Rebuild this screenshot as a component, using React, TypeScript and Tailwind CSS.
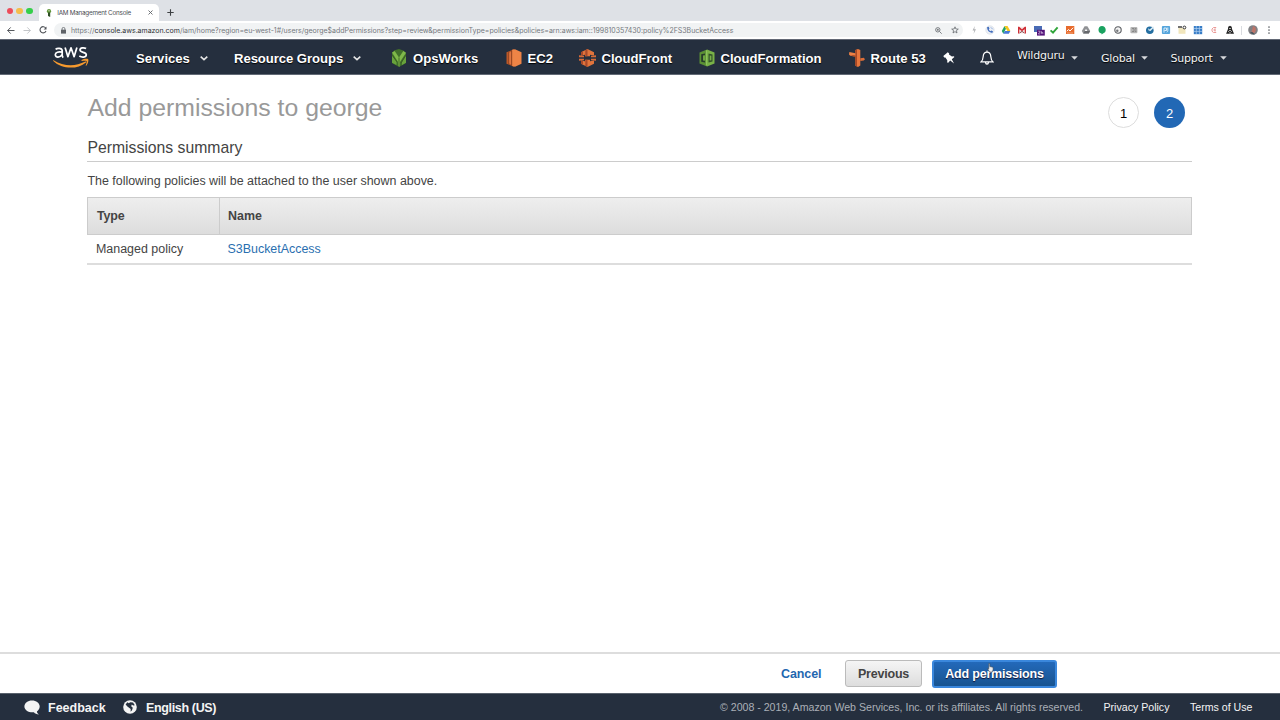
import type { ReactNode } from "react";

const Caret = () => (
  <svg className="mt-px shrink-0" width="8" height="5" viewBox="0 0 8 5" fill="none">
    <path d="M0.7 0.7 4 3.7 7.3 0.7" stroke="#e6e6e6" strokeWidth="1.6" />
  </svg>
);

const Triangle = () => (
  <svg className="shrink-0" width="7" height="4" viewBox="0 0 7 4">
    <path d="M0.2 0.2h6.6L3.5 3.8z" fill="#d8dadd" />
  </svg>
);

const Cell = ({ children }: { children: ReactNode }) => (
  <span className="flex h-4 w-4 shrink-0 items-center justify-center">
    <svg width="10" height="10" viewBox="0 0 10 10" className="overflow-visible">
      {children}
    </svg>
  </span>
);

const AwsLogo = () => (
  <svg width="37" height="25" viewBox="0 0 37 25" className="shrink-0 overflow-visible" fill="none">
    <g stroke="#fff" strokeWidth="1.7" strokeLinejoin="round">
      <path d="M2.6 4.3C3.8 3.2 8.8 2.5 9.2 5.6V10.2C9.3 11.4 9.6 11.9 10.2 12.6M9.1 7.2C5.5 6.5 2.3 7 2.3 9.8c0 3.1 4.9 3.1 6.9-.4" />
      <path d="M12.1 2.4 14.9 11.7 18 2.8 21.1 11.7 23.9 2.4" />
      <path d="M33.1 3.6C31.2 2.5 27 2.4 27 5c0 3 6.3 1.7 6.3 4.7 0 3-4.7 2.8-7 1.4" />
    </g>
    <path d="M0.6 15.2C10.2 21.1 21.8 22 32.4 16.5c.8-.3 1.2.4.6.9C23.8 25.1 8.6 24 .3 15.9c-.4-.4-.1-.9.3-.7z" fill="#f79a2e" />
    <path d="M28.6 15.1c2.1-1.5 6-1.6 6.6-.9.6.7-.2 4.8-2 6.5-.4.3-.7.1-.5-.3.5-1.2 1.4-3.8.9-4.3-.5-.6-3.2-.4-4.7-.2-.5 0-.6-.4-.3-.8z" fill="#f79a2e" />
  </svg>
);

const OpsWorksIcon = () => (
  <svg width="16" height="18" viewBox="0 0 16 18" className="shrink-0">
    <path d="M3.5 1.2 8 0l4.3 1.5L15 4v10l-7 4-7-4V4z" fill="#41702a" />
    <path d="M1 3.5 3.7 2 8 8.5 12.3 2 15 3.8 9 13v4.5L7 17V13z" fill="#7fb84a" />
    <path d="M1 6.5 5.5 12.5V16L1 13.7zM15 6.5 11 13v3l4-2.3z" fill="#69a33c" />
    <path d="M1 6 6 13M8 8.5V17M15 6 10 14" stroke="#35591f" strokeWidth=".8" />
  </svg>
);

const Ec2Icon = () => (
  <svg width="16" height="18" viewBox="0 0 16 18" className="shrink-0">
    <path d="M.5 3.3 8 .3v17.4l-7.5-3z" fill="#bd5827" />
    <path d="M6 .8 9 .2l6.5 3v11.5L9 17.8l-3-.8z" fill="#ee8446" />
    <path d="M2.8 2.7v12.8M5.7 1.3v15.5" stroke="#7e3b20" strokeWidth=".8" />
    <path d="M3.2 3.5 5.1 2.8v12.5l-1.9-.7z" fill="#dd7440" />
  </svg>
);

const CloudFrontIcon = () => (
  <svg width="17" height="18" viewBox="0 0 17 18" className="shrink-0">
    <path d="M2 3.2 8.5 0 15 3.2v3.3l-4-.7v1.5H6V5.8l-4 .7z" fill="#e0743c" />
    <path d="M2 14.8 8.5 18l6.5-3.2v-3.3l-4 .7v-1.5H6v1.5l-4-.7z" fill="#e0743c" />
    <path d="M2 3.2 4 2.3v3.8l-2 .4zM6.3 1.2 8.5 0v7.3H6.3zM2 14.8l2 .9v-3.8l-2-.4zM6.3 16.9 8.5 18v-7.3H6.3z" fill="#a8492a" />
    <path d="M0 6.2 5 6.8v1.4H0zM0 11.8l5-.6V9.8H0zM17 6.2l-5 .6v1.4h5zM17 11.8l-5-.6V9.8h5z" fill="#d66b39" />
  </svg>
);

const CloudFormationIcon = () => (
  <svg width="16" height="18" viewBox="0 0 16 18" className="shrink-0">
    <path d="M.5 3.5 8 .4v17.2l-7.5-3z" fill="#5b9034" />
    <path d="M8 .4l7.5 3.1v11.1L8 17.6z" fill="#79b147" />
    <path d="M2.2 5.3 6 4.6v9L2.2 12.8z" fill="#263b2b" />
    <path d="M4 6.6 6 6.2v5.6l-2-.4z" fill="#6fa640" />
    <path d="M9.5 4.6l4 .9v7l-4 .9z" fill="#31512a" />
    <path d="M10.7 6.4l1.7.3v4.6l-1.7.3z" fill="#78ae49" />
    <path d="M7.4 1.2v15.4" stroke="#94c763" strokeWidth="1" />
  </svg>
);

const Route53Icon = () => (
  <svg width="16" height="18" viewBox="0 0 16 18" className="shrink-0">
    <path d="M6.4 1 9 0l2.3 1v15.6L9 18l-2.6-1.2z" fill="#e7763d" />
    <path d="M6.4 1 8 .4v17L6.4 16.8z" fill="#a94824" />
    <path d="M.3 3 6.4 4.2v3.6L1.3 6.8 0 5.4z" fill="#ec8045" />
    <path d="M11.3 9.2 14.8 8.8 16 10.2l-1.2 1.4-3.5.4z" fill="#dc6d38" />
    <path d="M6.4 6.5 1.3 6l5.1 2z" fill="#9b4122" />
  </svg>
);

const Extensions = () => (
  <div className="flex">
    <Cell>
      <path d="M5.8 1 3.5 5.5h1.8L4.5 9 7 4.2H5.3z" fill="#b1b3b6" />
    </Cell>
    <Cell>
      <circle cx="5" cy="5" r="4.2" fill="#eef1f6" stroke="#cbd2dd" strokeWidth=".5" />
      <path d="M2 2.3C2.2 5.5 4 7.6 7.3 8l.7-1.7-1.8-.8-.8.7C4.4 5.6 4 5 3.8 4.3l.7-.7-.8-1.9z" fill="#416dbd" />
      <path d="M5.8 2.3l2 2" stroke="#769bd8" strokeWidth=".8" />
    </Cell>
    <Cell>
      <path d="M3.5 1 .8 6l1.5 2.7L5 3.8z" fill="#24a266" />
      <path d="M3.5 1h3l2.9 5H6.3z" fill="#f6c61b" />
      <path d="M3.8 6h5.6L7.8 8.7H2.3z" fill="#4779d7" />
    </Cell>
    <Cell>
      <path d="M1 1.8h8v6.6H1z" fill="#f7e8e7" />
      <path d="M1 1.8h1.2L5 4.2l2.8-2.4H9v6.6H7.7V4.3L5 6.3 2.3 4.3v4.1H1z" fill="#d02e36" />
      <path d="M2.6 8 5 6.4 7.4 8" stroke="#6c252c" strokeWidth=".8" fill="none" />
    </Cell>
    <Cell>
      <path d="M1 1h8v6H1z" fill="#496bb5" />
      <path d="M4 4.8h7.8v5.8H4z" fill="#54137a" />
      <path d="M5.2 6.2h1.7v1L5.3 9h1.8M8.3 6v3M8.3 7.5h1.5V9" stroke="#e4d3ef" strokeWidth=".6" fill="none" />
    </Cell>
    <Cell>
      <path d="M1.6 5.4 4 7.7 8.6 2.4" stroke="#2fa53a" strokeWidth="1.9" fill="none" />
    </Cell>
    <Cell>
      <path d="M1 1h8.3v8H1z" fill="#e76b2d" />
      <path d="M1.8 6.2 3.6 4.5 5 6 8.2 2.7" stroke="#fff" strokeWidth="1" fill="none" />
      <path d="M2 8h6" stroke="#f6b48e" strokeWidth=".8" />
    </Cell>
    <Cell>
      <path d="M3.6 1.2h2.8L9.2 6 7.8 8.6H2.2L.8 6z" fill="#909295" />
      <path d="M5 3.8 6.3 6H3.8z" fill="#fff" />
      <path d="M3.8 6h5.3L7.8 8.6H2.2z" fill="#66686c" />
    </Cell>
    <Cell>
      <path d="M5 .9a3.9 3.9 0 0 1 1 7.6L4.6 9.5V8.6A3.9 3.9 0 0 1 5 .9z" fill="#1aa260" />
    </Cell>
    <Cell>
      <circle cx="5" cy="5" r="3.2" fill="#f4f4f4" stroke="#5b5e62" strokeWidth="1.1" />
      <circle cx="4.3" cy="5.8" r="1.2" fill="#74777a" />
    </Cell>
    <Cell>
      <rect x="1.4" y="2" width="7" height="6.2" rx="1" fill="#b5b5b5" />
      <path d="M3 3.5h2v3H3M6 3.5h1.4M6 5h1.4M6 6.5h1.4" stroke="#777" strokeWidth=".7" fill="none" />
    </Cell>
    <Cell>
      <circle cx="4.8" cy="5.2" r="3.8" fill="#236ea1" />
      <path d="M3 3.2 4.7 4.6 8 1.2l1 1.2L5.5 6 3.6 5.6z" fill="#d9eaf5" />
    </Cell>
    <Cell>
      <rect x=".9" y="1" width="8.2" height="8" rx="1" fill="#55a5dc" />
      <path d="M3 7.7V3h2.5v2.5H3.4M6.8 2.5v3c0 1-.7 1.4-1 1.8" stroke="#e4f3fd" strokeWidth=".9" fill="none" />
    </Cell>
    <Cell>
      <path d="M1.5 3h7v5.8h-7z" fill="#f1e6bd" />
      <path d="M1 2h4" stroke="#333" strokeWidth="1.4" />
      <circle cx="7.4" cy="2.5" r="1.4" fill="#fff" stroke="#333" strokeWidth="1" />
    </Cell>
    <Cell>
      <path d="M.8 1h8.4v8.2H.8z" fill="#377dc7" />
      <path d="M3.3 1v8M6.4 1v8M1 3.5h8M1 6.4h8" stroke="#b1d0ef" strokeWidth=".7" />
    </Cell>
    <Cell>
      <path d="M7.2 2.5H4.5L3 4v2.2l1.5 1.3h2.7M7 4.1H5.2v1.7H7" stroke="#ea9a98" strokeWidth="1" fill="none" />
    </Cell>
    <Cell>
      <path d="M5 .7 6.7 1.8 7 4 9 8.8H1.1L3 4 3.2 1.8z" fill="#242424" />
      <path d="M3.2 6.8 5 5.1l1.8 1.7M4.1 3.5h1.8M5 7v1.5" stroke="#fff" strokeWidth=".7" fill="none" />
    </Cell>
  </div>
);

const Browser = () => (
  <div className="flex h-10 flex-col border-b border-[#626875] font-['Inter',sans-serif]">
    <div className="flex h-[21px] items-end bg-[#dee1e6]">
      <div className="mb-[7px] ml-[6.5px] flex gap-[3.8px]">
        <span className="h-[6.2px] w-[6.2px] rounded-full bg-[#ed4c5a]" />
        <span className="h-[6.2px] w-[6.2px] rounded-full bg-[#f5bd4b]" />
        <span className="h-[6.2px] w-[6.2px] rounded-full bg-[#35cf4a]" />
      </div>
      <div className="ml-[6.5px] flex h-[17px] w-[120px] items-center rounded-t-[5px] bg-white">
        <svg width="6" height="8" viewBox="0 0 6 8" className="ml-[7px]">
          <circle cx="3" cy="2.2" r="2.1" fill="#5e9438" />
          <path d="M2 3.5h2.2V8L2 7z" fill="#2e4f25" />
          <circle cx="3" cy="1.7" r=".7" fill="#d1e0bd" />
        </svg>
        <span className="ml-[5px] w-[91px] text-[6.3px] leading-[10px] tracking-[-0.22px] whitespace-nowrap text-[#4b4e52]">IAM Management Console</span>
        <svg width="5" height="5" viewBox="0 0 5 5">
          <path d="M.5.5l4 4M4.5.5l-4 4" stroke="#5f6368" strokeWidth=".9" />
        </svg>
      </div>
      <svg width="7" height="7" viewBox="0 0 7 7" className="mb-[5px] ml-[7.5px]">
        <path d="M3.5.3v6.4M.3 3.5h6.4" stroke="#3d4043" strokeWidth="1.1" />
      </svg>
    </div>
    <div className="flex h-[18px] items-center bg-white">
      <svg width="8" height="7" viewBox="0 0 8 7" className="ml-[7px]" fill="none" stroke="#55585d">
        <path d="M7.5 3.5h-7M3.7.4.7 3.5l3 3.1" />
      </svg>
      <svg width="8" height="7" viewBox="0 0 8 7" className="ml-2" fill="none" stroke="#c4c6c9">
        <path d="M.5 3.5h7M4.3.4l3 3.1-3 3.1" />
      </svg>
      <svg width="8" height="8" viewBox="0 0 8 8" className="ml-2" fill="none" stroke="#505358" strokeWidth="1.1">
        <path d="M6.7 2A3.1 3.1 0 1 0 7 5" />
        <path d="M7.5.5v3H4.7z" fill="#505358" stroke="none" />
      </svg>
      <div className="ml-[7px] flex h-[14px] w-[909px] items-center rounded-full bg-[#f1f3f4]">
        <svg width="5" height="7" viewBox="0 0 5 7" className="ml-[6.5px]">
          <path d="M0 2.7h5V6.6H0z" fill="#5f6368" />
          <path d="M1.1 3V1.8a1.4 1.4 0 0 1 2.8 0V3" stroke="#5f6368" strokeWidth=".8" fill="none" />
        </svg>
        <span className="ml-[5.5px] w-[864px] pt-px text-[7px] leading-[10px] tracking-[-0.018px] whitespace-nowrap text-[#74787d]">
          https://<span className="text-[#2f3236]">console.aws.amazon.com</span>
          /iam/home?region=eu-west-1#/users/george$addPermissions?step=review&amp;permissionType=policies&amp;policies=arn:aws:iam::199810357430:policy%2FS3BucketAccess
        </span>
        <svg width="7" height="7" viewBox="0 0 7 7" fill="none" stroke="#5f6368" strokeWidth=".8">
          <circle cx="2.8" cy="2.8" r="2.2" />
          <path d="M4.5 4.5 6.7 6.7M1.8 2.8h2M2.8 1.8v2" />
        </svg>
        <svg width="8" height="8" viewBox="0 0 8 8" className="ml-[9px]" fill="none" stroke="#5f6368" strokeWidth=".75">
          <path d="M4 .8 4.9 3l2.4.1-1.9 1.5L6 7 4 5.6 2 7l.6-2.4L.7 3.1 3.1 3z" />
        </svg>
      </div>
      <div className="ml-[3px]">
        <Extensions />
      </div>
      <span className="ml-[3px] h-[9px] w-px bg-[#dadce0]" />
      <svg width="10" height="10" viewBox="0 0 10 10" className="ml-[6px]">
        <circle cx="5" cy="5" r="4.8" fill="#7f8084" />
        <path d="M5 1.2c2.5 0 3.4 2.5 2.6 5L6 8.6 3.5 7z" fill="#bd7469" />
        <path d="M2 7.3 4.3 7 7 9.3a4.8 4.8 0 0 1-5-2z" fill="#49555e" />
      </svg>
      <svg width="2" height="8" viewBox="0 0 2 8" className="ml-[10px]" fill="#5f6368">
        <circle cx="1" cy="1" r=".85" />
        <circle cx="1" cy="4" r=".85" />
        <circle cx="1" cy="7" r=".85" />
      </svg>
    </div>
  </div>
);

const Nav = () => (
  <nav className="flex h-[35px] items-center border-b border-[#626a76] bg-[#252f3e] pl-[53px] text-[13.1px] font-bold whitespace-nowrap text-white [text-shadow:0_1px_1px_#000]">
    <div className="flex w-[83px] shrink-0">
      <AwsLogo />
    </div>
    <div className="flex flex-1 items-center pt-[2px]">
      <div className="flex w-[98px] shrink-0 items-center">
        <span className="w-[64px] pt-px">Services</span>
        <Caret />
      </div>
      <div className="flex w-[157px] shrink-0 items-center">
        <span className="w-[119px] pt-px tracking-[-0.05px]">Resource Groups</span>
        <Caret />
      </div>
      <div className="flex w-[114.5px] shrink-0 items-center gap-[6px]">
        <OpsWorksIcon />
        <span className="pt-px">OpsWorks</span>
      </div>
      <div className="flex w-[73px] shrink-0 items-center gap-[6px]">
        <Ec2Icon />
        <span className="pt-px">EC2</span>
      </div>
      <div className="flex w-[120px] shrink-0 items-center gap-[6px]">
        <CloudFrontIcon />
        <span className="pt-px">CloudFront</span>
      </div>
      <div className="flex w-[150px] shrink-0 items-center gap-[6px]">
        <CloudFormationIcon />
        <span className="pt-px">CloudFormation</span>
      </div>
      <div className="flex w-[94.5px] shrink-0 items-center gap-[6px]">
        <Route53Icon />
        <span className="pt-px">Route 53</span>
      </div>
      <div className="flex w-[36.5px] shrink-0">
        <svg width="12" height="12" viewBox="0 0 12 12" fill="#fff">
          <path d="M4.8.3 6.2 1.5 6 2.4 8.9 4.4 10.8 4.3 11.4 5.1 8.8 7.3 11 11.5 7.2 8.5 5 10.9 4.2 10.3 4.3 8.2 2.4 5.4 1.2 5.5.3 4.1z" />
        </svg>
      </div>
      <div className="flex w-[37.5px] shrink-0">
        <svg width="14" height="15" viewBox="0 0 14 15" fill="none" stroke="#fff" strokeWidth="1.2">
          <path d="M1 11.9c2-1.7 2-2.9 2.2-5.5C3.4 3.8 4.7 2.2 7 2.2s3.6 1.6 3.8 4.2c.2 2.6.2 3.8 2.2 5.5zM5.5 12.4c.2 2.2 2.8 2.2 3 0M7 .5v1.7" />
        </svg>
      </div>
      <div className="flex items-center font-['DejaVu_Sans',sans-serif] text-[11px] font-normal tracking-[-0.2px] text-[#f2f3f3]">
        <span className="flex w-[84px] shrink-0 items-center">
          <span className="w-[54px] pb-[3px]">Wildguru</span>
          <Triangle />
        </span>
        <span className="flex w-[69.5px] shrink-0 items-center">
          <span className="w-[40px] pt-[2px]">Global</span>
          <Triangle />
        </span>
        <span className="flex shrink-0 items-center">
          <span className="w-[49px] pt-[2px]">Support</span>
          <Triangle />
        </span>
      </div>
    </div>
  </nav>
);

const Content = () => (
  <main className="flex flex-1 flex-col pr-[88px] pl-[87.4px] text-[12.45px] text-[#444]">
    <header className="flex h-[61px] items-start justify-between">
      <h1 className="mt-[18px] text-[24.8px] leading-[30px] text-[#999]">Add permissions to george</h1>
      <div className="mt-[22px] mr-[7px] flex gap-[15px] text-[13px]">
        <span className="flex h-[31px] w-[31px] items-center justify-center rounded-full border border-[#ddd] pt-[2px] text-black">1</span>
        <span className="flex h-[31px] w-[31px] items-center justify-center rounded-full bg-[#2268b5] pt-[2px] text-white">2</span>
      </div>
    </header>
    <h2 className="h-[26px] border-b border-[#ccc] text-[15.75px] leading-[23px]">Permissions summary</h2>
    <p className="mt-[9px] leading-5">The following policies will be attached to the user shown above.</p>
    <div className="mt-[6px] flex h-[38px] items-center border border-[#ccc] bg-linear-to-b from-[#eee] to-[#ddd] font-bold">
      <span className="flex h-full w-[131.6px] items-center border-r border-[#ccc] pl-[8.6px] tracking-[-0.15px]">Type</span>
      <span className="pl-2">Name</span>
    </div>
    <div className="flex h-[30px] items-center border-b-2 border-[#ddd] pl-[8.6px]">
      <span className="w-[131.5px]">Managed policy</span>
      <a className="text-[#2a6fb0]">S3BucketAccess</a>
    </div>
  </main>
);

const Actions = () => (
  <div className="flex h-[41px] items-center border-t-2 border-[#ddd] pl-[781px] text-[12.5px] font-bold text-[#444]">
    <a className="w-[64px] pt-[2px] tracking-[-0.1px] text-[#1f67b0]">Cancel</a>
    <button className="h-[27px] w-[77px] rounded-[3px] border border-[#bbb] bg-linear-to-b from-[#f5f5f5] to-[#ddd] pt-[2px] tracking-[-0.2px]">Previous</button>
    <button className="relative ml-[10px] h-[28px] w-[125px] rounded-[3px] border-2 border-[#3a87dc] bg-linear-to-b from-[#2369ba] to-[#185490] pt-[2px] tracking-[-0.2px] whitespace-nowrap text-white [text-shadow:0_1px_1px_#113]">
      Add permissions
      <svg width="7" height="10" viewBox="0 0 7 10" className="absolute top-[1px] left-[53px]">
        <path d="M1.8.5h1v3l3.3.8v2.5L5.3 9H2.5L.5 5.5l1.3.2z" fill="#eee" stroke="#3b4858" strokeWidth=".6" />
      </svg>
    </button>
  </div>
);

const Footer = () => (
  <footer className="flex h-[27px] items-center border-t border-[#59616c] bg-[#252f3e] pl-6 text-[12.5px] font-bold whitespace-nowrap text-[#f4f4f4]">
    <svg width="17" height="15" viewBox="0 0 17 15" className="shrink-0">
      <path d="M8 .5c4.2 0 7.7 2.6 7.7 6 0 2.2-1.2 3.8-2.8 4.9.1 1.2.8 2.2 2 3-2.1 0-3.9-.7-5-2.1C4.7 12.8.4 10.2.4 6.5.4 3.1 3.8.5 8 .5z" fill="#f4f4f4" />
    </svg>
    <span className="ml-[7px] w-[75px] pt-[2px]">Feedback</span>
    <svg width="14" height="14" viewBox="0 0 14 14" className="shrink-0">
      <circle cx="7" cy="7" r="6.8" fill="#f4f4f4" />
      <path d="M7.2 2.2 10 2.5l1.8 2.7-1.6.3L8.8 4.5l-.6 1.8 1.6 1.4L9 10.3l-1.4 1.4.1-2.6-3.3-2.6-1.8-2 1.8-2.2 1.4 1z" fill="#252f3e" />
    </svg>
    <span className="ml-[9px] w-[574px] pt-[2px] tracking-[-0.35px]">English (US)</span>
    <div className="flex pt-[2px] text-[10.6px] font-normal">
      <span className="w-[383.5px] text-[#abb0b7]">© 2008 - 2019, Amazon Web Services, Inc. or its affiliates. All rights reserved.</span>
      <span className="w-[86.5px]">Privacy Policy</span>
      <span>Terms of Use</span>
    </div>
  </footer>
);

export default function App() {
  return (
    <div className="flex h-[720px] w-[1280px] flex-col overflow-hidden bg-white font-['Liberation_Sans',sans-serif]">
      <Browser />
      <Nav />
      <Content />
      <Actions />
      <Footer />
    </div>
  );
}
